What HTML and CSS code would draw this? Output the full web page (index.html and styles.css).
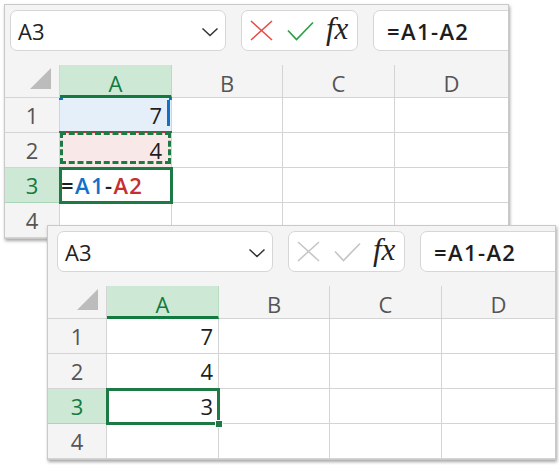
FILE: index.html
```html
<!DOCTYPE html>
<html>
<head>
<meta charset="utf-8">
<link rel="stylesheet" href="styles.css">
</head>
<body>
<div class="desk">
  <div class="win win1">
    <div class="toolbar">
      <div class="namebox"><span>A3</span>
        <svg class="chev" width="18" height="10" viewBox="0 0 18 10"><path d="M1.5 1.5 L9 8.5 L16.5 1.5" fill="none" stroke="#333" stroke-width="1.5"/></svg>
      </div>
      <div class="btns">
        <svg class="ico" width="23" height="21" viewBox="0 0 23 21"><path d="M1 1 L22 20 M22 1 L1 20" stroke="#ea4a44" stroke-width="1.6" fill="none"/></svg>
        <svg class="ico" width="27" height="20" viewBox="0 0 27 20"><path d="M1 9.5 L9.5 18.5 L26 1.5" stroke="#2e9e48" stroke-width="1.7" fill="none"/></svg>
        <span class="fx">fx</span>
      </div>
      <div class="formula">=A1-A2</div>
    </div>
    <div class="grid">
      <div class="corner"><span class="tri"></span></div>
      <div class="ch sel">A</div>
      <div class="ch">B</div>
      <div class="ch">C</div>
      <div class="ch last">D</div>

      <div class="rh">1</div>
      <div class="c num ref1">7</div>
      <div class="c"></div><div class="c"></div><div class="c last"></div>

      <div class="rh">2</div>
      <div class="c num ref2">4</div>
      <div class="c"></div><div class="c"></div><div class="c last"></div>

      <div class="rh sel">3</div>
      <div class="c edit"><span>=</span><span class="blue">A1</span><span>-</span><span class="red">A2</span></div>
      <div class="c"></div><div class="c"></div><div class="c last"></div>

      <div class="rh">4</div>
      <div class="c"></div>
      <div class="c"></div><div class="c"></div><div class="c last"></div>
    </div>
  </div>

  <div class="win win2">
    <div class="toolbar">
      <div class="namebox"><span>A3</span>
        <svg class="chev" width="18" height="10" viewBox="0 0 18 10"><path d="M1.5 1.5 L9 8.5 L16.5 1.5" fill="none" stroke="#333" stroke-width="1.5"/></svg>
      </div>
      <div class="btns">
        <svg class="ico" width="23" height="21" viewBox="0 0 23 21"><path d="M1 1 L22 20 M22 1 L1 20" stroke="#c6c6c6" stroke-width="1.6" fill="none"/></svg>
        <svg class="ico" width="27" height="20" viewBox="0 0 27 20"><path d="M1 9.5 L9.5 18.5 L26 1.5" stroke="#c6c6c6" stroke-width="1.7" fill="none"/></svg>
        <span class="fx">fx</span>
      </div>
      <div class="formula">=A1-A2</div>
    </div>
    <div class="grid">
      <div class="corner"><span class="tri"></span></div>
      <div class="ch sel">A</div>
      <div class="ch">B</div>
      <div class="ch">C</div>
      <div class="ch last">D</div>

      <div class="rh">1</div>
      <div class="c num">7</div>
      <div class="c"></div><div class="c"></div><div class="c last"></div>

      <div class="rh">2</div>
      <div class="c num">4</div>
      <div class="c"></div><div class="c"></div><div class="c last"></div>

      <div class="rh sel">3</div>
      <div class="c num active">3<span class="handle"></span></div>
      <div class="c"></div><div class="c"></div><div class="c last"></div>

      <div class="rh">4</div>
      <div class="c"></div>
      <div class="c"></div><div class="c"></div><div class="c last"></div>
    </div>
  </div>
</div>
</body>
</html>
```

FILE: styles.css
```css
* { box-sizing: border-box; }
html, body { margin: 0; padding: 0; background: #ffffff; }
body { font-family: "Open Sans", "Noto Sans", sans-serif; color: #222; }

.desk { position: relative; width: 559px; height: 465px; overflow: hidden; }

.win {
  position: absolute;
  height: 235px;
  background: #f4f4f4;
  border: 1px solid #c9c9c9;
  box-shadow: 1px 2px 3px rgba(0,0,0,0.35);
  overflow: hidden;
}
.win1 { left: 4px; top: 4px; width: 505px; --rh: 55px; --pl: 5px; }
.win2 { left: 47px; top: 225px; width: 509px; --rh: 59px; --pl: 9px; }

.toolbar {
  height: 60px;
  display: flex;
  align-items: flex-start;
  padding: 5px 0 0 var(--pl);
  gap: 15px;
}
.namebox, .btns, .formula {
  flex: none;
  height: 41px;
  background: #fff;
  border: 1px solid #d6d6d6;
  border-radius: 7px;
  display: flex;
  align-items: center;
}
.namebox {
  width: 216px;
  padding: 0 6px 0 7px;
  justify-content: space-between;
  font-size: 22px;
  color: #222;
}
.chev { margin-top: 2px; }
.btns {
  width: 117px;
  padding: 0 6px 0 8px;
}
.btns .ico { flex: none; }
.btns .ico + .ico { margin-left: 14px; margin-top: 1px; }
.fx {
  font-family: "Liberation Serif", "DejaVu Serif", serif;
  font-style: italic;
  font-size: 31px;
  color: #222;
  margin-left: 12px;
  line-height: 1;
  margin-top: -4px;
}
.formula {
  width: 220px;
  padding-left: 13px;
  font-size: 22px;
  font-weight: 600;
  letter-spacing: 1.4px;
  color: #1e1e1e;
}

.grid {
  display: grid;
  grid-template-columns: var(--rh) 112px 111px 112px 1fr;
  grid-template-rows: 33px repeat(4, 35px);
}
.corner {
  position: relative;
  border-right: 1px solid #d4d4d4;
  border-bottom: 1px solid #d4d4d4;
}
.tri {
  position: absolute;
  right: 8px;
  bottom: 8px;
  width: 0; height: 0;
  border-left: 21px solid transparent;
  border-bottom: 21px solid #bcbcbc;
}
.ch {
  display: flex; align-items: center; justify-content: center;
  font-size: 22px; color: #555;
  border-right: 1px solid #d4d4d4;
  border-bottom: 1px solid #d4d4d4;
  padding-top: 3px;
}
.ch.last { border-right: none; }
.ch.sel {
  background: #cde9d6;
  color: #137a3f;
  border-bottom: 3px solid #137a3f;
  border-right-color: #b7dcc3;
  padding-top: 5px;
}
.rh {
  display: flex; align-items: center; justify-content: center;
  font-size: 22px; color: #555;
  border-right: 1px solid #d4d4d4;
  border-bottom: 1px solid #d4d4d4;
}
.rh.sel { background: #cde9d6; color: #137a3f; border-bottom-color: #a9d6b8; }
.c {
  position: relative;
  background: #fff;
  border-right: 1px solid #d4d4d4;
  border-bottom: 1px solid #d4d4d4;
  font-size: 22px;
  display: flex; align-items: center;
}
.c.last { border-right: none; }
.c.num { justify-content: flex-end; padding-right: 5px; color: #1e1e1e; }

.ref1 { background: #e5eff9; padding-right: 9px !important; }
.ref1::before {
  content: ""; position: absolute; right: 1px; top: 2px; width: 3px; height: 26px; background: #1370c8;
}
.ref1::after {
  content: ""; position: absolute; left: -1px; right: -2px; top: 0; height: 2px;
  border-left: 4px solid #1370c8; border-right: 4px solid #1370c8;
}
.ref2 { background: #f9e8e8; padding-right: 9px !important; }
.ref2::before {
  content: ""; position: absolute; left: -1px; right: -1px; top: -2px; height: 2px; background: #c62f2f;
}
.ref2::after {
  content: ""; position: absolute; left: 0; right: 0; top: -1px; bottom: 3px;
  border: 3px dashed #1d7a44;
}

.edit {
  font-weight: 600; letter-spacing: 1.4px;
  outline: 3px solid #1d7a44;
  outline-offset: -2px;
  z-index: 1;
}
.edit span:first-child { margin-left: 1px; color: #1e1e1e; }
.blue { color: #1370c8; }
.red { color: #c62f2f; }

.active {
  outline: 3px solid #1d7a44;
  outline-offset: -2px;
  z-index: 1;
}
.handle {
  position: absolute; right: -5px; bottom: -5px;
  width: 8px; height: 8px; background: #1d7a44;
  border: 1px solid #fff;
}
```
